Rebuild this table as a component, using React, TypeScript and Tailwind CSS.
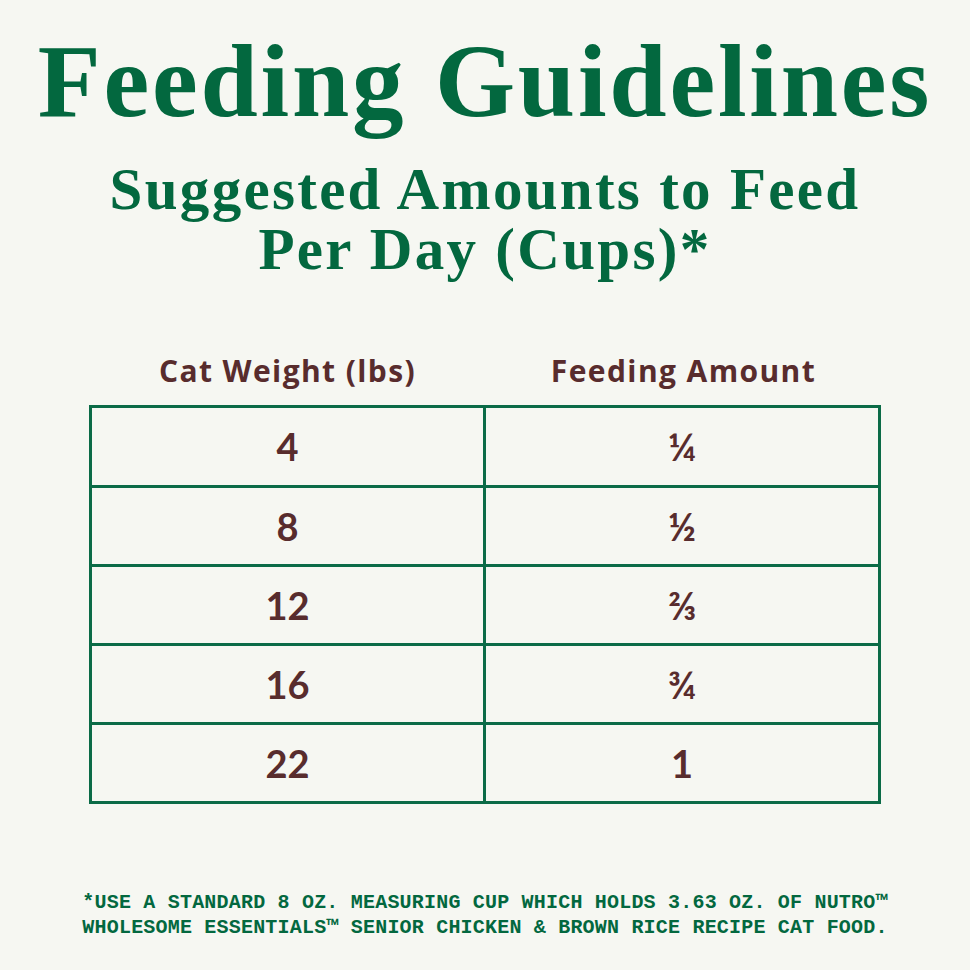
const ROWS: [string, string][] = [
  ['4', '¼'],
  ['8', '½'],
  ['12', '⅔'],
  ['16', '¾'],
  ['22', '1'],
];

export default function App() {
  return (
    <div className="w-[970px] h-[970px] bg-[#f6f7f2] flex flex-col items-center overflow-hidden">
      <h1 className="mt-[30px] font-['Liberation_Serif',serif] font-bold text-[103px] leading-[103px] tracking-[2.8px] text-[#03683f] whitespace-nowrap">
        Feeding Guidelines
      </h1>
      <h2 className="mt-[26px] font-['Liberation_Serif',serif] font-bold text-[59px] leading-[60px] tracking-[2.3px] text-[#03683f] text-center">
        Suggested Amounts to Feed
        <br />
        Per Day (Cups)*
      </h2>

      <div className="mt-[74px] w-[792px] text-[#582c2d]">
        <div className="grid grid-cols-[397px_1fr] font-['Open_Sans',sans-serif] text-[30px] leading-[36px] font-bold tracking-[1.4px]">
          <div className="text-center">Cat Weight (lbs)</div>
          <div className="text-center">Feeding Amount</div>
        </div>
        <div className="mt-[16px] border-[3px] border-[#0b6b47] font-['Lato',sans-serif]">
          {ROWS.map(([w, a], i) => (
            <div
              key={w}
              className={`grid grid-cols-[394px_1fr] ${i > 0 ? 'h-[79px] border-t-[3px] border-[#0b6b47]' : 'h-[77px]'}`}
            >
              <div className="flex items-center justify-center border-r-[3px] border-[#0b6b47] text-[38px] font-bold">
                {w}
              </div>
              <div className="flex items-center justify-center text-[38px] font-bold">{a}</div>
            </div>
          ))}
        </div>
      </div>

      <p className="mt-[86px] font-['Liberation_Mono',monospace] font-bold text-[20px] leading-[25px] tracking-[0.2px] text-[#03683f] text-center whitespace-nowrap">
        *USE A STANDARD 8 OZ. MEASURING CUP WHICH HOLDS 3.63 OZ. OF NUTRO™
        <br />
        WHOLESOME ESSENTIALS™ SENIOR CHICKEN &amp; BROWN RICE RECIPE CAT FOOD.
      </p>
    </div>
  );
}
